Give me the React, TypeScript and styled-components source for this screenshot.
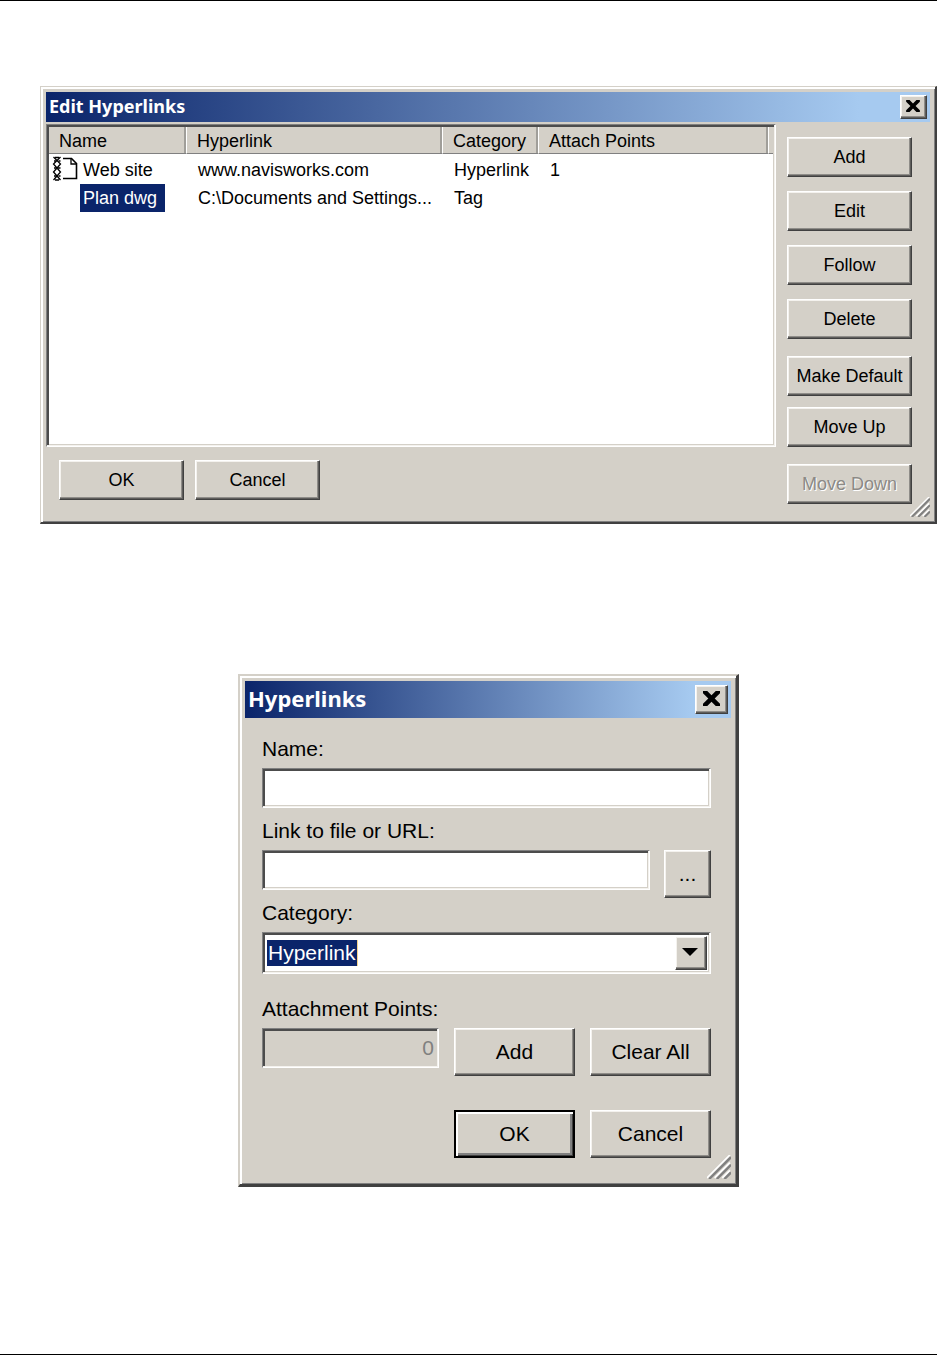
import React from "react";
import styled, { createGlobalStyle, css } from "styled-components";

const face = "#d4d0c8";
const shade = "#808080";
const dark = "#404040";
const navy = "#0a246a";

const GlobalStyle = createGlobalStyle`
  * { box-sizing: border-box; }
  body {
    margin: 0;
    background: #fff;
    color: #000;
    font-family: "Liberation Sans", Arial, sans-serif;
  }
  button, input, select { font: inherit; color: inherit; margin: 0; border-radius: 0; outline: none; }
`;

const raised = css`
  border: 1px solid;
  border-color: #fff ${dark} ${dark} #fff;
  box-shadow: inset -1px -1px #5e5d5b, inset -2px -2px #8f8d89, inset 1px 1px #f4f2ee;
  background: ${face};
`;

const sunken = css`
  border: 1px solid;
  border-color: ${shade} #fff #fff ${shade};
  box-shadow: inset -1px -1px #f4f2ee, inset 2px 2px #4c4c4c, inset -2px -2px ${face};
`;

const Page = styled.main`
  min-height: 100vh;
  padding: 85px 0 0 40px;
  border-top: 1px solid #000;
  border-bottom: 1px solid #000;
  display: flex;
  flex-direction: column;
  gap: 150px;
`;

const Dialog = styled.section<{ $small?: boolean }>`
  position: relative;
  background: ${face};
  border: solid;
  border-width: ${(p) => (p.$small ? "2px 3px 3px 2px" : "1px 2px 2px 1px")};
  border-color: ${face} ${dark} ${dark} ${face};
  box-shadow: inset 2px 2px #fff, inset -1px -1px ${shade};
  padding: 5px;
  font-size: ${(p) => (p.$small ? 21 : 18)}px;
  ${(p) =>
    p.$small &&
    css`
      width: 100%;
      max-width: 501px;
      align-self: center;
    `}
`;

const TitleBar = styled.header<{ $small?: boolean }>`
  display: flex;
  align-items: center;
  justify-content: space-between;
  height: ${(p) => (p.$small ? 37 : 30)}px;
  padding: 0 3px;
  background: linear-gradient(to right, ${navy}, #a6caf0 92%);
`;

const Title = styled.h2<{ $small?: boolean }>`
  margin: 0;
  padding-bottom: ${(p) => (p.$small ? 4 : 2)}px;
  color: #fff;
  font-family: "Noto Sans", sans-serif;
  font-size: ${(p) => (p.$small ? 22 : 18)}px;
  line-height: 28px;
  font-weight: 700;
`;

const CloseButton = styled.button<{ $small?: boolean }>`
  ${raised}
  width: ${(p) => (p.$small ? 33 : 27)}px;
  height: ${(p) => (p.$small ? 29 : 24)}px;
  padding: 0 1px 2px 0;
  display: flex;
  align-items: center;
  justify-content: center;
`;

const PushButton = styled.button<{ $default?: boolean }>`
  ${raised}
  width: 125px;
  height: 40px;
  padding: 0;
  white-space: nowrap;
  line-height: 24px;
  ${(p) =>
    p.$default &&
    css`
      border: 2px solid #000;
      box-shadow: inset 2px 2px #fff, inset -1px -1px ${dark}, inset -3px -3px ${shade};
    `}
  &:disabled {
    color: #8c8a86;
    text-shadow: 1px 1px #fff;
  }
`;

const Columns = styled.div`
  display: flex;
  padding: 2px 18px 13px 0;
  gap: 11px;
`;

const ListColumn = styled.div`
  flex: 1;
  min-width: 0;
  display: flex;
  flex-direction: column;
`;

const ListBox = styled.div`
  ${sunken}
  height: 323px;
  padding: 2px;
  background: #fff;
  overflow: hidden;
`;

const Table = styled.table`
  width: 100%;
  table-layout: fixed;
  border-collapse: separate;
  border-spacing: 0;
  line-height: 28px;
  text-align: left;
  tbody::before {
    content: "";
    display: block;
    height: 2px;
  }
`;

const Head = styled.th`
  height: 27px;
  padding: 2px 0 0 10px;
  font-weight: 400;
  line-height: 24px;
  background: ${face};
  border-right: 1px solid #fff;
  border-bottom: 1px solid ${shade};
  box-shadow: inset -2px 0 #a09e99;
  &:last-child { border-right: 0; box-shadow: none; }
`;

const Cell = styled.td`
  height: 28px;
  padding: 0 0 0 11px;
  white-space: nowrap;
`;

const NameCell = styled(Cell)`
  padding-left: 3px;
`;

const NameContent = styled.div`
  display: flex;
  align-items: center;
  gap: 1px;
`;

const IconSlot = styled.span`
  display: flex;
  width: 27px;
  height: 28px;
`;

const Label = styled.span<{ $selected?: boolean }>`
  padding: 0 8px 0 3px;
  ${(p) => p.$selected && css`background: ${navy}; color: #fff;`}
`;

const Actions = styled.div`
  display: flex;
  gap: 11px;
  padding: 13px 0 0 13px;
`;

const SideBar = styled.div`
  display: flex;
  flex-direction: column;
  gap: 17px;
  padding-top: 13px;
`;

const ButtonGroup = styled.div<{ $gap: number }>`
  display: flex;
  flex-direction: column;
  gap: ${(p) => p.$gap}px;
`;

const Grip = styled.svg`
  position: absolute;
  right: 5px;
  bottom: 5px;
`;

const Form = styled.form`
  padding: 17px 20px 21px 17px;
`;

const Field = styled.div<{ $gap?: number }>`
  margin-top: ${(p) => p.$gap ?? 0}px;
`;

const FieldLabel = styled.label`
  display: block;
  height: 33px;
  line-height: 28px;
`;

const Row = styled.div<{ $gap: number }>`
  display: flex;
  align-items: flex-start;
  gap: ${(p) => p.$gap}px;
`;

const TextBox = styled.input`
  ${sunken}
  flex: 1;
  width: 100%;
  min-width: 0;
  height: 40px;
  padding: 0 4px;
  background: #fff;
  &:disabled {
    background: ${face};
    color: ${shade};
    text-align: right;
  }
`;

const FormButton = styled(PushButton)<{ $narrow?: boolean }>`
  width: ${(p) => (p.$narrow ? 47 : 121)}px;
  height: 48px;
`;

const ComboBox = styled.div`
  ${sunken}
  display: flex;
  align-items: center;
  justify-content: space-between;
  height: 42px;
  padding: 0 3px 1px 4px;
  background: #fff;
`;

const ComboSelect = styled.select`
  appearance: none;
  height: 26px;
  padding: 0 1px;
  border: 0;
  border-right: 1px solid #f5d48c;
  background: ${navy};
  color: #fff;
  line-height: 26px;
`;

const ComboArrow = styled.button`
  ${raised}
  width: 32px;
  height: 34px;
  padding: 0 2px 2px 0;
  display: flex;
  align-items: center;
  justify-content: center;
`;

const FormActions = styled(Row)`
  justify-content: flex-end;
  margin-top: 34px;
`;

function CrossIcon({ size }: { size: number }) {
  return (
    <svg width={size} height={size - 2} viewBox="0 0 16 14" aria-hidden="true">
      <path d="M0 0h4l4 4 4-4h4v2l-5 5 5 5v2h-4l-4-4-4 4H0v-2l5-5-5-5z" />
    </svg>
  );
}

function ResizeGrip({ size }: { size: number }) {
  return (
    <Grip width={size} height={size} viewBox="0 0 22 22" aria-hidden="true">
      <path d="M0 21L21 0M7 21L21 7M14 21l7-7" stroke="#fff" strokeWidth="1.6" />
      <path d="M2 22L22 2M9 22L22 9M16 22l6-6" stroke={shade} strokeWidth="2.2" />
    </Grip>
  );
}

function PageIcon() {
  return (
    <svg width="27" height="28" viewBox="0 0 27 28" fill="none" stroke="#000" aria-hidden="true">
      <path d="M11 2.500H19.500L24.500 7.500V22.500H11" strokeWidth="1.600" />
      <path d="M19 2.500V8H24.500" strokeWidth="1.300" />
      <path
        d="M1.500 1l7 7-7 8 7 8M8.500 1l-7 7 7 8-7 8"
        strokeWidth="1.300"
      />
      <path
        d="M3 1.500h4M2 5h2M6.500 5h2M2 12h2M6 12h2.500M2 20h2M6.500 20h2M3 24h4"
        strokeWidth="1.600"
      />
    </svg>
  );
}

const links = [
  { name: "Web site", url: "www.navisworks.com", category: "Hyperlink", points: "1", icon: true },
  { name: "Plan dwg", url: "C:\\Documents and Settings...", category: "Tag", points: "", selected: true },
];

function EditHyperlinks() {
  return (
    <Dialog aria-label="Edit Hyperlinks">
      <TitleBar>
        <Title>Edit Hyperlinks</Title>
        <CloseButton type="button" aria-label="Close">
          <CrossIcon size={14} />
        </CloseButton>
      </TitleBar>
      <Columns>
        <ListColumn>
          <ListBox>
            <Table>
              <colgroup>
                <col width="138" />
                <col width="256" />
                <col width="96" />
                <col width="230" />
                <col />
              </colgroup>
              <thead>
                <tr>
                  <Head>Name</Head>
                  <Head>Hyperlink</Head>
                  <Head>Category</Head>
                  <Head>Attach Points</Head>
                  <Head as="td" />
                </tr>
              </thead>
              <tbody>
                {links.map((l) => (
                  <tr key={l.name}>
                    <NameCell>
                      <NameContent>
                        <IconSlot>{l.icon && <PageIcon />}</IconSlot>
                        <Label $selected={l.selected}>{l.name}</Label>
                      </NameContent>
                    </NameCell>
                    <Cell>{l.url}</Cell>
                    <Cell>{l.category}</Cell>
                    <Cell>{l.points}</Cell>
                  </tr>
                ))}
              </tbody>
            </Table>
          </ListBox>
          <Actions>
            <PushButton type="button">OK</PushButton>
            <PushButton type="button">Cancel</PushButton>
          </Actions>
        </ListColumn>
        <SideBar>
          <ButtonGroup $gap={14}>
            <PushButton type="button">Add</PushButton>
            <PushButton type="button">Edit</PushButton>
            <PushButton type="button">Follow</PushButton>
            <PushButton type="button">Delete</PushButton>
          </ButtonGroup>
          <ButtonGroup $gap={11}>
            <PushButton type="button">Make Default</PushButton>
            <PushButton type="button">Move Up</PushButton>
          </ButtonGroup>
          <PushButton type="button" disabled>Move Down</PushButton>
        </SideBar>
      </Columns>
      <ResizeGrip size={20} />
    </Dialog>
  );
}

function Hyperlinks() {
  return (
    <Dialog $small aria-label="Hyperlinks">
      <TitleBar $small>
        <Title $small>Hyperlinks</Title>
        <CloseButton $small type="button" aria-label="Close">
          <CrossIcon size={17} />
        </CloseButton>
      </TitleBar>
      <Form>
        <Field>
          <FieldLabel htmlFor="name">Name:</FieldLabel>
          <Row $gap={0}>
            <TextBox id="name" type="text" />
          </Row>
        </Field>
        <Field $gap={9}>
          <FieldLabel htmlFor="url">Link to file or URL:</FieldLabel>
          <Row $gap={14}>
            <TextBox id="url" type="text" />
            <FormButton type="button" $narrow>...</FormButton>
          </Row>
        </Field>
        <Field $gap={1}>
          <FieldLabel htmlFor="category">Category:</FieldLabel>
          <ComboBox>
            <ComboSelect id="category">
              <option>Hyperlink</option>
            </ComboSelect>
            <ComboArrow type="button" aria-label="Show categories">
              <svg width="16" height="8" viewBox="0 0 16 8" aria-hidden="true">
                <path d="M0 0h16L8 8z" />
              </svg>
            </ComboArrow>
          </ComboBox>
        </Field>
        <Field $gap={21}>
          <FieldLabel htmlFor="points">Attachment Points:</FieldLabel>
          <Row $gap={15}>
            <TextBox id="points" type="text" value="0" disabled readOnly />
            <FormButton type="button">Add</FormButton>
            <FormButton type="button">Clear All</FormButton>
          </Row>
        </Field>
        <FormActions $gap={15}>
          <FormButton type="button" $default>OK</FormButton>
          <FormButton type="button">Cancel</FormButton>
        </FormActions>
      </Form>
      <ResizeGrip size={24} />
    </Dialog>
  );
}

export default function App() {
  return (
    <>
      <GlobalStyle />
      <Page>
        <EditHyperlinks />
        <Hyperlinks />
      </Page>
    </>
  );
}
